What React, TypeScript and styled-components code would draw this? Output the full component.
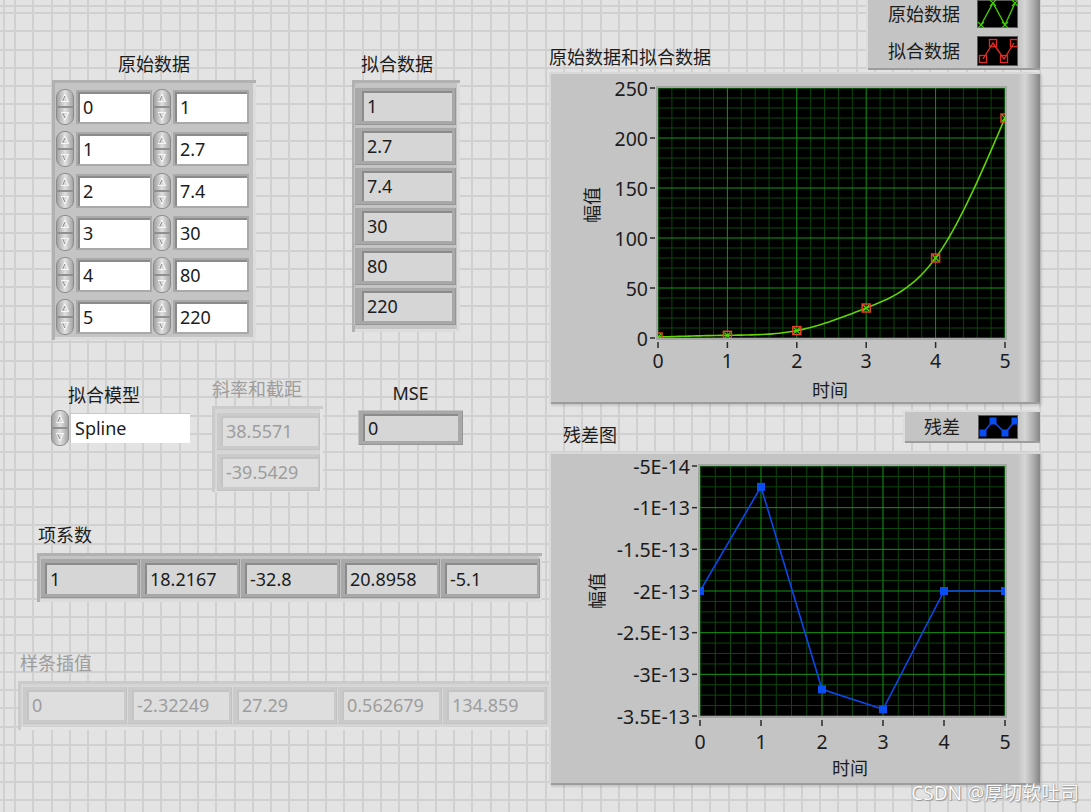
import React from 'react';
import styled, { createGlobalStyle, css } from 'styled-components';

const GlobalStyle = createGlobalStyle`
  html, body {
    margin: 0;
    padding: 0;
    background: #e3e3e3;
  }
  body {
    font-family: "Noto Sans", "Noto Sans CJK SC", sans-serif;
  }
`;

const Panel = styled.div`
  position: relative;
  width: 1091px;
  height: 812px;
  overflow: hidden;
  display: flex;
  background-color: #e3e3e3;
  background-image:
    repeating-linear-gradient(to right, #d0d0d0 0 2px, transparent 2px 18.3px),
    repeating-linear-gradient(to bottom, #d0d0d0 0 2px, transparent 2px 18.3px);
  background-position: 14px 0, 0 12px;
  font-family: "Noto Sans", "Noto Sans CJK SC", sans-serif;
  color: #1c1c1c;
`;

const LeftColumn = styled.div`
  width: 549px;
  flex: none;
  display: flex;
  flex-direction: column;
`;

const RightColumn = styled.div`
  width: 496px;
  flex: none;
  display: flex;
  flex-direction: column;
`;

const ControlRow = styled.div<{ $top: number }>`
  display: flex;
  align-items: flex-start;
  margin-top: ${p => p.$top}px;
`;

const Group = styled.div<{ $left: number; $top?: number }>`
  display: flex;
  flex-direction: column;
  align-items: flex-start;
  margin-left: ${p => p.$left}px;
  margin-top: ${p => p.$top ?? 0}px;
`;

const Caption = styled.div<{ $dim?: boolean; $center?: boolean; $indent?: number; $gap?: number }>`
  height: 24px;
  line-height: 24px;
  font-size: 18px;
  white-space: nowrap;
  align-self: ${p => (p.$center ? 'center' : 'flex-start')};
  padding-left: ${p => p.$indent ?? 0}px;
  margin-bottom: ${p => p.$gap ?? 0}px;
  color: ${p => (p.$dim ? '#9d9d9d' : '#1c1c1c')};
`;

const Shell = styled.div<{ $dim?: boolean; $pad: string; $column?: boolean; $gap?: number }>`
  display: flex;
  flex-direction: ${p => (p.$column ? 'column' : 'row')};
  gap: ${p => p.$gap ?? 0}px;
  padding: ${p => p.$pad};
  background: ${p => (p.$dim ? '#d5d5d5' : '#c4c4c4')};
  box-shadow: ${p =>
    p.$dim
      ? 'inset 3px 3px 0 #cbcbcb, inset -3px -3px 0 #e4e4e4'
      : 'inset 3px 3px 0 #b1b1b1, inset -3px -3px 0 #dcdcdc'};
`;

const ArrayRow = styled.div`
  display: flex;
  align-items: center;
  gap: 2px;
  height: 42px;
`;

const Cell = styled.div`
  display: flex;
  align-items: center;
  gap: 3px;
`;

const Entry = styled.div<{ $w: number; $framed?: boolean }>`
  box-sizing: border-box;
  width: ${p => p.$w}px;
  height: 30px;
  padding-left: 5px;
  display: flex;
  align-items: center;
  background: #ffffff;
  font-size: 18px;
  color: #1c1c1c;
  ${p =>
    p.$framed
      ? css`
          box-shadow: inset 2px 2px 0 #8b8b8b, 0 0 0 2px #a9a9a9;
        `
      : css`
          box-shadow: inset 1px 1px 0 #c8c8c8;
        `}
`;

const Bezel = styled.div<{ $w: number; $h: number; $pad: string; $dim?: boolean }>`
  box-sizing: border-box;
  display: flex;
  width: ${p => p.$w}px;
  height: ${p => p.$h}px;
  padding: ${p => p.$pad};
  background: ${p => (p.$dim ? '#cacaca' : '#a8a8a8')};
  box-shadow: ${p =>
    p.$dim
      ? 'inset 1px 1px 0 #d8d8d8, inset -1px -1px 0 #c2c2c2'
      : 'inset 1px 1px 0 #c2c2c2, inset -1px -1px 0 #969696'};
`;

const Readout = styled.div<{ $dim?: boolean }>`
  flex: 1;
  display: flex;
  align-items: center;
  padding-left: 5px;
  font-size: 18px;
  white-space: nowrap;
  background: ${p => (p.$dim ? '#dedede' : '#d6d6d6')};
  color: ${p => (p.$dim ? '#9d9d9d' : '#1c1c1c')};
  box-shadow: inset 2px 2px 0 ${p => (p.$dim ? '#c4c4c4' : '#8b8b8b')};
`;

const Ring = styled.div`
  display: flex;
  align-items: center;
`;

const SpinnerSvg = styled.svg`
  display: block;
  flex: none;
`;

const raised = css`
  background:
    linear-gradient(
      to right,
      rgba(0, 0, 0, 0) 0,
      rgba(0, 0, 0, 0) calc(100% - 22px),
      rgba(255, 255, 255, 0.3) calc(100% - 15px),
      rgba(0, 0, 0, 0.08) calc(100% - 8px),
      rgba(0, 0, 0, 0.32) 100%
    ),
    #c4c4c4;
`;

const Strip = styled.div<{ $h: number }>`
  height: ${p => p.$h}px;
  display: flex;
  justify-content: space-between;
`;

const StripTitle = styled(Caption)<{ $left?: number; $bottom: number }>`
  align-self: flex-end;
  margin-left: ${p => p.$left ?? 0}px;
  margin-bottom: ${p => p.$bottom}px;
`;

const LegendBox = styled.div<{ $w: number; $h: number; $pad: string; $top?: number; $bottom?: number; $lit?: boolean }>`
  ${raised};
  box-sizing: border-box;
  width: ${p => p.$w}px;
  height: ${p => p.$h}px;
  padding: ${p => p.$pad};
  margin-right: 5px;
  margin-top: ${p => p.$top ?? 0}px;
  margin-bottom: ${p => p.$bottom ?? 0}px;
  align-self: ${p => (p.$top !== undefined ? 'flex-start' : 'flex-end')};
  display: flex;
  flex-direction: column;
  justify-content: ${p => (p.$lit ? 'center' : 'flex-end')};
  gap: 8px;
  box-shadow: ${p =>
    p.$lit
      ? 'inset 2px 2px 0 #dcdcdc, inset 0 -2px 0 #9c9c9c'
      : 'inset 2px 0 0 #dcdcdc, inset 0 -2px 0 #9c9c9c'};
`;

const LegendRow = styled.div<{ $gap: number }>`
  display: flex;
  align-items: center;
  justify-content: flex-end;
  gap: ${p => p.$gap}px;
`;

const LegendText = styled.span`
  font-size: 18px;
  line-height: 24px;
  white-space: nowrap;
`;

const ChartFrame = styled.div<{ $h: number }>`
  ${raised};
  width: 491px;
  height: ${p => p.$h}px;
  box-shadow: inset 2px 2px 0 #d8d8d8, inset 0 -2px 0 #9c9c9c, 2px 2px 2px rgba(0, 0, 0, 0.12);
  svg {
    display: block;
  }
`;

const Watermark = styled.div`
  position: absolute;
  right: 12px;
  bottom: 6px;
  font-size: 19px;
  color: #fbfbfb;
  text-shadow: 0 0 1px #7d7d7d, 1px 1px 1px #9a9a9a;
  white-space: nowrap;
`;

const raw = [
  ['0', '1'],
  ['1', '2.7'],
  ['2', '7.4'],
  ['3', '30'],
  ['4', '80'],
  ['5', '220'],
];
const fitted = ['1', '2.7', '7.4', '30', '80', '220'];
const slope = ['38.5571', '-39.5429'];
const coef = ['1', '18.2167', '-32.8', '20.8958', '-5.1'];
const splineVals = ['0', '-2.32249', '27.29', '0.562679', '134.859'];

// natural cubic spline through the raw data (second derivatives = 样条插值)
const ys = [1, 2.7, 7.4, 30, 80, 220];
const M = [0, -2.32249, 27.29, 0.562679, 134.859, 0];
const spline = (x: number) => {
  const i = Math.min(4, Math.floor(x));
  const a = i + 1 - x;
  const b = x - i;
  return (M[i] * a ** 3) / 6 + (M[i + 1] * b ** 3) / 6 + (ys[i] - M[i] / 6) * a + (ys[i + 1] - M[i + 1] / 6) * b;
};

const residual = [-2, -0.75, -3.18, -3.42, -2, -2]; // ×1E-13

function Spinner() {
  return (
    <SpinnerSvg width={20} height={38} viewBox="0 0 20 38">
      <path d="M1.5 18.6 L1.5 10 C1.5 4.5 5 1.5 10 1.5 C15 1.5 18.5 4.5 18.5 10 L18.5 18.6 Z" fill="url(#spinFill)" stroke="#8a8a8a" />
      <path d="M1.5 19.4 L1.5 28 C1.5 33.5 5 36.5 10 36.5 C15 36.5 18.5 33.5 18.5 28 L18.5 19.4 Z" fill="url(#spinFill)" stroke="#8a8a8a" />
      <path d="M10 6.5 L13.3 13.5 L6.7 13.5 Z" fill="none" stroke="#f6f6f6" strokeWidth={1.2} />
      <path d="M10 8 L7.6 12.8" stroke="#777" strokeWidth={0.9} />
      <path d="M6.7 24.5 L13.3 24.5 L10 31.5 Z" fill="none" stroke="#f6f6f6" strokeWidth={1.2} />
      <path d="M7.6 25.3 L10 30" stroke="#777" strokeWidth={0.9} />
    </SpinnerSvg>
  );
}

function Indicator({ value, w, h, pad, dim }: { value: string; w: number; h: number; pad: string; dim?: boolean }) {
  return (
    <Bezel $w={w} $h={h} $pad={pad} $dim={dim}>
      <Readout $dim={dim}>{value}</Readout>
    </Bezel>
  );
}

interface Box {
  x: number;
  y: number;
  w: number;
  h: number;
}

interface PlotProps {
  id: string;
  width: number;
  height: number;
  box: Box;
  xSub: number;
  ySub: number;
  xLabels: string[];
  yLabels: string[];
  xLabelY: number;
  xTitle: [number, number];
  yTitle: [number, number];
  children: React.ReactNode;
}

function Plot({ id, width, height, box, xSub, ySub, xLabels, yLabels, xLabelY, xTitle, yTitle, children }: PlotProps) {
  const nx = xLabels.length - 1;
  const ny = yLabels.length - 1;
  const minor: React.ReactNode[] = [];
  const major: React.ReactNode[] = [];
  for (let i = 0; i <= nx * xSub; i++) {
    const x = box.x + (i * box.w) / (nx * xSub);
    (i % xSub === 0 ? major : minor).push(<line key={`x${i}`} x1={x} x2={x} y1={box.y} y2={box.y + box.h} />);
  }
  for (let j = 0; j <= ny * ySub; j++) {
    const y = box.y + (j * box.h) / (ny * ySub);
    (j % ySub === 0 ? major : minor).push(<line key={`y${j}`} x1={box.x} x2={box.x + box.w} y1={y} y2={y} />);
  }
  return (
    <svg width={width} height={height} fontFamily='"Noto Sans", "Noto Sans CJK SC", sans-serif' fontSize={18} fill="#1c1c1c">
      <defs>
        <clipPath id={id}>
          <rect x={box.x} y={box.y} width={box.w} height={box.h} />
        </clipPath>
      </defs>
      <rect x={box.x} y={box.y} width={box.w} height={box.h} fill="#000" />
      <g stroke="#0a470a" strokeWidth={1}>{minor}</g>
      <g stroke="#129612" strokeWidth={1}>{major}</g>
      <g clipPath={`url(#${id})`}>{children}</g>
      <rect x={box.x - 1} y={box.y - 1} width={box.w + 2} height={box.h + 2} fill="none" stroke="#a4a4a4" strokeWidth={2} />
      {yLabels.map((t, j) => {
        const y = box.y + (j * box.h) / ny;
        return (
          <g key={t}>
            <line x1={box.x - 8} x2={box.x - 3} y1={y} y2={y} stroke="#2a2a2a" strokeWidth={1.5} />
            <text x={box.x - 10} y={y} fontSize={19.5} textAnchor="end" dominantBaseline="central">
              {t}
            </text>
          </g>
        );
      })}
      {xLabels.map((t, i) => {
        const x = box.x + (i * box.w) / nx;
        return (
          <g key={t}>
            <line x1={x} x2={x} y1={box.y + box.h + 4} y2={box.y + box.h + 10} stroke="#2a2a2a" strokeWidth={1.5} />
            <text x={x} y={xLabelY} fontSize={19.5} textAnchor="middle" dominantBaseline="central">
              {t}
            </text>
          </g>
        );
      })}
      <text x={xTitle[0]} y={xTitle[1]} textAnchor="middle" dominantBaseline="central">
        时间
      </text>
      <text
        x={yTitle[0]}
        y={yTitle[1]}
        textAnchor="middle"
        dominantBaseline="central"
        transform={`rotate(-90 ${yTitle[0]} ${yTitle[1]})`}
      >
        幅值
      </text>
    </svg>
  );
}

const box1: Box = { x: 109, y: 16, w: 347, h: 250 };
const box2: Box = { x: 151, y: 14, w: 305, h: 250 };

function DataChart() {
  const px = (x: number) => box1.x + (x * box1.w) / 5;
  const py = (v: number) => box1.y + box1.h - v;
  const curve: string[] = [];
  for (let k = 0; k <= 100; k++) {
    const x = k * 0.05;
    curve.push(`${px(x).toFixed(2)},${py(spline(x)).toFixed(2)}`);
  }
  return (
    <Plot
      id="clipData"
      width={491}
      height={332}
      box={box1}
      xSub={5}
      ySub={5}
      xLabels={['0', '1', '2', '3', '4', '5']}
      yLabels={['250', '200', '150', '100', '50', '0']}
      xLabelY={288}
      xTitle={[281, 318]}
      yTitle={[43, 133]}
    >
      <polyline points={curve.join(' ')} fill="none" stroke="#62d600" strokeWidth={1.6} />
      {ys.map((v, i) => {
        const x = px(i);
        const y = py(v);
        return (
          <g key={i}>
            <rect x={x - 4} y={y - 4} width={8} height={8} fill="none" stroke="#e8402c" strokeWidth={1.5} />
            <path d={`M${x - 3} ${y - 3} L${x + 3} ${y + 3} M${x + 3} ${y - 3} L${x - 3} ${y + 3}`} stroke="#52d400" strokeWidth={1.2} />
          </g>
        );
      })}
    </Plot>
  );
}

function ResidualChart() {
  const px = (x: number) => box2.x + (x * box2.w) / 5;
  const py = (v: number) => box2.y + ((-0.5 - v) / 3) * box2.h;
  const pts = residual.map((v, i) => `${px(i)},${py(v)}`).join(' ');
  return (
    <Plot
      id="clipResidual"
      width={491}
      height={333}
      box={box2}
      xSub={4}
      ySub={4}
      xLabels={['0', '1', '2', '3', '4', '5']}
      yLabels={['-5E-14', '-1E-13', '-1.5E-13', '-2E-13', '-2.5E-13', '-3E-13', '-3.5E-13']}
      xLabelY={289}
      xTitle={[301, 316]}
      yTitle={[48, 139]}
    >
      <polyline points={pts} fill="none" stroke="#0a48ea" strokeWidth={1.6} />
      {residual.map((v, i) => (
        <rect key={i} x={px(i) - 4} y={py(v) - 4} width={8} height={8} fill="#0a4df2" />
      ))}
    </Plot>
  );
}

function LegendIcon({ w, h, children }: { w: number; h: number; children: React.ReactNode }) {
  return (
    <svg width={w} height={h} viewBox={`0 0 ${w} ${h}`} style={{ display: 'block', flex: 'none' }}>
      <rect x={0.5} y={0.5} width={w - 1} height={h - 1} fill="#000" stroke="#5a5a5a" />
      {children}
    </svg>
  );
}

function RawIcon() {
  const p = [
    [4, 25],
    [16, 3],
    [28, 25],
    [38, 3],
  ];
  return (
    <LegendIcon w={41} h={28}>
      <polyline points={p.map(q => q.join(',')).join(' ')} fill="none" stroke="#3fcc00" strokeWidth={1.4} />
      {p.map(([x, y], i) => (
        <path key={i} d={`M${x - 3} ${y - 3} L${x + 3} ${y + 3} M${x + 3} ${y - 3} L${x - 3} ${y + 3}`} stroke="#3fcc00" strokeWidth={1.2} />
      ))}
    </LegendIcon>
  );
}

function FitIcon() {
  const p = [
    [6, 23],
    [16, 7],
    [27, 23],
    [37, 7],
  ];
  return (
    <LegendIcon w={41} h={30}>
      <polyline points={p.map(q => q.join(',')).join(' ')} fill="none" stroke="#e32a22" strokeWidth={1.4} />
      {p.map(([x, y], i) => (
        <rect key={i} x={x - 3.5} y={y - 3.5} width={7} height={7} fill="none" stroke="#e32a22" strokeWidth={1.3} />
      ))}
    </LegendIcon>
  );
}

function ResidualIcon() {
  const p = [
    [5, 18],
    [15, 6],
    [27, 18],
    [37, 6],
  ];
  return (
    <LegendIcon w={40} h={24}>
      <polyline points={p.map(q => q.join(',')).join(' ')} fill="none" stroke="#0a48ea" strokeWidth={1.6} />
      {p.map(([x, y], i) => (
        <rect key={i} x={x - 3.5} y={y - 3.5} width={7} height={7} fill="#0a4df2" />
      ))}
    </LegendIcon>
  );
}

export default function App() {
  return (
    <>
      <GlobalStyle />
      <svg width={0} height={0} style={{ position: 'absolute' }}>
        <defs>
          <linearGradient id="spinFill" x1="0" x2="1" y1="0" y2="0">
            <stop offset="0" stopColor="#9e9e9e" />
            <stop offset="0.5" stopColor="#e0e0e0" />
            <stop offset="1" stopColor="#a2a2a2" />
          </linearGradient>
        </defs>
      </svg>
      <Panel>
        <LeftColumn>
          <ControlRow $top={52}>
            <Group $left={52}>
              <Caption $center $gap={4}>
                原始数据
              </Caption>
              <Shell $pad="6px 9px 2px 3px" $column>
                {raw.map(([a, b], i) => (
                  <ArrayRow key={i}>
                    <Cell>
                      <Spinner />
                      <Entry $w={72} $framed>
                        {a}
                      </Entry>
                    </Cell>
                    <Cell>
                      <Spinner />
                      <Entry $w={72} $framed>
                        {b}
                      </Entry>
                    </Cell>
                  </ArrayRow>
                ))}
              </Shell>
            </Group>
            <Group $left={96}>
              <Caption $indent={9} $gap={4}>
                拟合数据
              </Caption>
              <Shell $pad="7px 4px 7px 2px" $column $gap={2}>
                {fitted.map(v => (
                  <Indicator key={v} value={v} w={102} h={38} pad="4px 4px 4px 8px" />
                ))}
              </Shell>
            </Group>
          </ControlRow>

          <ControlRow $top={37}>
            <Group $left={50} $top={6}>
              <Caption $indent={18} $gap={2}>
                拟合模型
              </Caption>
              <Ring>
                <Spinner />
                <Entry $w={120}>Spline</Entry>
              </Ring>
            </Group>
            <Group $left={22}>
              <Caption $dim $gap={5}>
                斜率和截距
              </Caption>
              <Shell $dim $pad="6px 3px 1px 4px" $column $gap={3}>
                {slope.map(v => (
                  <Indicator key={v} value={v} w={104} h={38} pad="4px 2px 4px 5px" dim />
                ))}
              </Shell>
            </Group>
            <Group $left={35} $top={4}>
              <Caption $center $gap={5}>
                MSE
              </Caption>
              <Indicator value="0" w={105} h={35} pad="4px 5px 4px 5px" />
            </Group>
          </ControlRow>

          <ControlRow $top={31}>
            <Group $left={37}>
              <Caption $indent={1} $gap={6}>
                项系数
              </Caption>
              <Shell $pad="5px 2px 4px 3px">
                {coef.map(v => (
                  <Indicator key={v} value={v} w={100} h={40} pad="5px 3px 4px 5px" />
                ))}
              </Shell>
            </Group>
          </ControlRow>

          <ControlRow $top={49}>
            <Group $left={18}>
              <Caption $dim $indent={2} $gap={6}>
                样条插值
              </Caption>
              <Shell $dim $pad="5px 5px 6px 4px">
                {splineVals.map(v => (
                  <Indicator key={v} value={v} w={105} h={38} pad="4px 3px 4px 5px" dim />
                ))}
              </Shell>
            </Group>
          </ControlRow>
        </LeftColumn>

        <RightColumn>
          <Strip $h={72}>
            <StripTitle $bottom={3}>原始数据和拟合数据</StripTitle>
            <LegendBox $w={174} $h={70} $pad="0 22px 4px 22px" $bottom={2}>
              <LegendRow $gap={17}>
                <LegendText>原始数据</LegendText>
                <RawIcon />
              </LegendRow>
              <LegendRow $gap={17}>
                <LegendText>拟合数据</LegendText>
                <FitIcon />
              </LegendRow>
            </LegendBox>
          </Strip>
          <ChartFrame $h={332}>
            <DataChart />
          </ChartFrame>

          <Strip $h={48}>
            <StripTitle $left={14} $bottom={5}>
              残差图
            </StripTitle>
            <LegendBox $w={137} $h={33} $pad="0 22px 0 21px" $top={6} $lit>
              <LegendRow $gap={18}>
                <LegendText>残差</LegendText>
                <ResidualIcon />
              </LegendRow>
            </LegendBox>
          </Strip>
          <ChartFrame $h={333}>
            <ResidualChart />
          </ChartFrame>
        </RightColumn>

        <Watermark>CSDN @厚切软吐司</Watermark>
      </Panel>
    </>
  );
}
